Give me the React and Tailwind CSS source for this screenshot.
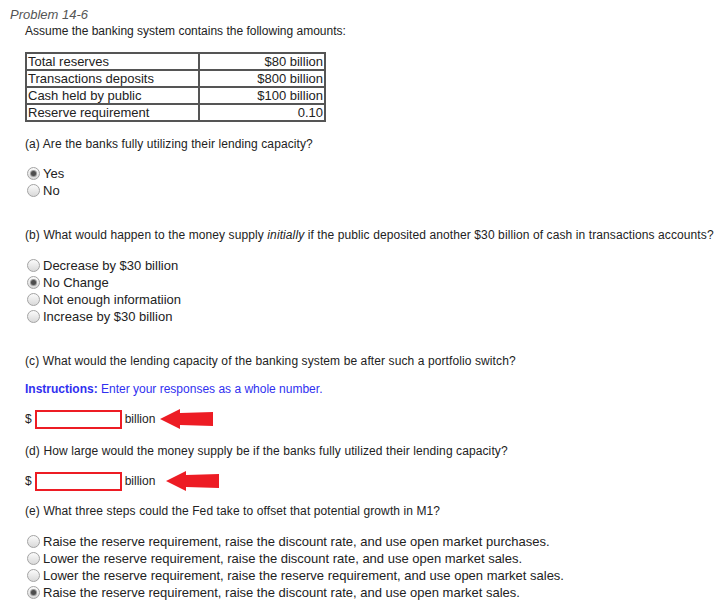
import React from "react";

const rows = [
  ["Total reserves", "$80 billion"],
  ["Transactions deposits", "$800 billion"],
  ["Cash held by public", "$100 billion"],
  ["Reserve requirement", "0.10"],
];

const Radio = ({ checked, label }) => (
  <label className="flex items-center h-[17px] leading-[17px] text-[13px] text-[#222]">
    <span className="relative mr-[3px] w-[13px] h-[13px] rounded-full border border-[#a3a3a3] bg-gradient-to-b from-[#fbfbfb] to-[#d9d9d9] flex items-center justify-center shrink-0">
      {checked && <span className="w-[5px] h-[5px] rounded-full bg-[#4d4d4d] ring-1 ring-[#9a9a9a]"></span>}
    </span>
    {label}
  </label>
);

const Arrow = () => (
  <svg width="54" height="22" viewBox="0 0 54 22" className="block">
    <polygon points="0,11 20,1 20,5 53,4 53,18 20,17 20,21" fill="#ed1c24" />
  </svg>
);

const AnswerRow = ({ arrowGap }) => (
  <div className="flex items-center h-[20px] text-[12px] text-[#222]">
    <span className="mr-[3px]">$</span>
    <span className="w-[87px] h-[19px] border-2 border-[#ed1c24] bg-white"></span>
    <span className="ml-[3px]">billion</span>
    <span style={{ marginLeft: arrowGap }}>
      <Arrow />
    </span>
  </div>
);

export default function App() {
  return (
    <div className="w-[723px] h-[615px] bg-white overflow-hidden font-['Liberation_Sans',Arial,sans-serif] text-[#222]">
      <div className="pt-[7px] pl-[10px] text-[13px] leading-[16px] italic text-[#555]">Problem 14-6</div>
      <div className="pl-[25px]">
        <div className="text-[12px] leading-[16px]">Assume the banking system contains the following amounts:</div>

        <table className="mt-[13px] border-collapse border-2 border-[#555] text-[13px]">
          <tbody>
            {rows.map(([k, v]) => (
              <tr key={k} className="h-[17px]">
                <td className="border-2 border-[#555] w-[173px] px-[1px] leading-[13px] py-0">{k}</td>
                <td className="border-2 border-[#555] w-[126px] px-[1px] leading-[13px] py-0 text-right">{v}</td>
              </tr>
            ))}
          </tbody>
        </table>

        <div className="mt-[14px] text-[12px] leading-[16px] tracking-[0.1px]">(a) Are the banks fully utilizing their lending capacity?</div>
        <div className="mt-[13px] pl-[2px]">
          <Radio checked label="Yes" />
          <Radio label="No" />
        </div>

        <div className="mt-[28px] text-[12px] leading-[16px] tracking-[0.1px] whitespace-nowrap">
          (b) What would happen to the money supply <i>initially</i> if the public deposited another $30 billion of cash in transactions accounts?
        </div>
        <div className="mt-[14px] pl-[2px]">
          <Radio label="Decrease by $30 billion" />
          <Radio checked label="No Change" />
          <Radio label="Not enough informatiion" />
          <Radio label="Increase by $30 billion" />
        </div>

        <div className="mt-[28px] text-[12px] leading-[16px] tracking-[0.1px]">(c) What would the lending capacity of the banking system be after such a portfolio switch?</div>
        <div className="mt-[12px] text-[12px] leading-[16px] text-[#3030f0]">
          <b>Instructions:</b> Enter your responses as a whole number.
        </div>
        <div className="mt-[12px]">
          <AnswerRow arrowGap={5} />
        </div>

        <div className="mt-[14px] text-[12px] leading-[16px] tracking-[0.1px]">(d) How large would the money supply be if the banks fully utilized their lending capacity?</div>
        <div className="mt-[12px]">
          <AnswerRow arrowGap={11} />
        </div>

        <div className="mt-[12px] text-[12px] leading-[16px] tracking-[0.1px]">(e) What three steps could the Fed take to offset that potential growth in M1?</div>
        <div className="mt-[14px] pl-[2px]">
          <Radio label="Raise the reserve requirement, raise the discount rate, and use open market purchases." />
          <Radio label="Lower the reserve requirement, raise the discount rate, and use open market sales." />
          <Radio label="Lower the reserve requirement, raise the reserve requirement, and use open market sales." />
          <Radio checked label="Raise the reserve requirement, raise the discount rate, and use open market sales." />
        </div>
      </div>
    </div>
  );
}
